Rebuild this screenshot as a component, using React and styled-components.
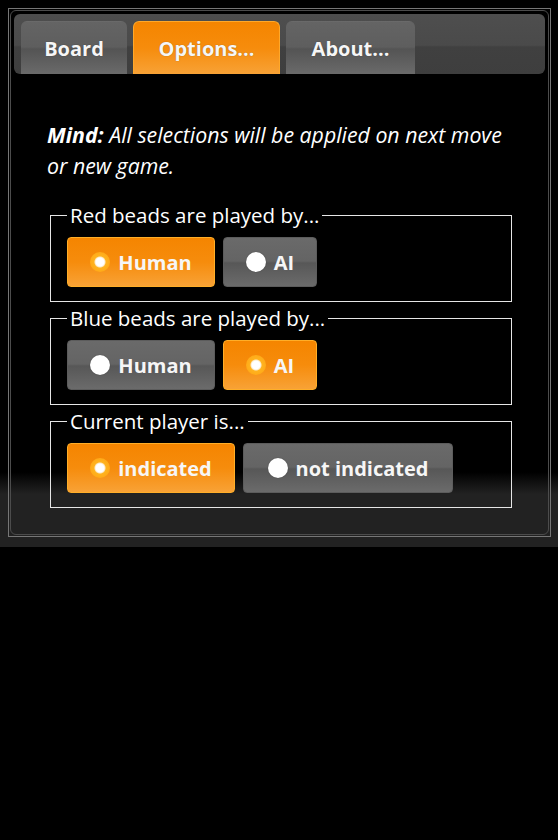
import React from 'react'
import styled, { createGlobalStyle } from 'styled-components'

const GlobalStyle = createGlobalStyle`
  html, body {
    margin: 0;
    background: #000;
  }
  body {
    font-family: "Open Sans", "Noto Sans", sans-serif;
    color: #f4f4f4;
  }
`

const Page = styled.div`
  box-sizing: border-box;
  height: 547px;
  padding: 8px 7px 10px 8px;
  background: linear-gradient(
    to bottom,
    #000 0,
    #000 472px,
    #222 494px,
    #222 100%
  );
`

const Frame = styled.div`
  box-sizing: border-box;
  height: 100%;
  border: 1px solid #767676;
  padding: 1px;
`

const FrameInner = styled.div`
  box-sizing: border-box;
  height: 100%;
  border: 1px solid #4c4c4c;
  border-radius: 6px;
  padding: 3px;
`

const TabBar = styled.div`
  box-sizing: border-box;
  height: 60px;
  display: flex;
  align-items: flex-end;
  gap: 6px;
  padding: 0 7px;
  border-radius: 6px;
  background: linear-gradient(
    to bottom,
    #4e4e4e 0%,
    #4a4a4a 52%,
    #404040 55%,
    #3e3e3e 100%
  );
`

const Tab = styled.div`
  box-sizing: border-box;
  width: ${(p) => p.width}px;
  height: 53px;
  display: flex;
  align-items: center;
  justify-content: center;
  border-radius: 6px 6px 0 0;
  font-size: 20px;
  font-weight: 700;
  color: #f6f6f6;
  text-shadow: 0 0 1px rgba(0, 0, 0, 0.4);
  border: 1px solid ${(p) => (p.active ? '#ffa82a' : 'transparent')};
  border-bottom: none;
  background: ${(p) =>
    p.active
      ? 'linear-gradient(to bottom, #f58500 0%, #f68c0c 50%, #f8a236 100%)'
      : 'linear-gradient(to bottom, #646464 0%, #5e5e5e 48%, #545454 52%, #6a6a6a 100%)'};
`

const Content = styled.div`
  padding: 45px 33px 0 36px;
`

const Note = styled.p`
  margin: 0 0 0 -3px;
  font-size: 21.3px;
  line-height: 31px;
  font-style: italic;
  color: #fff;
  b {
    font-weight: 700;
  }
`

const Group = styled.fieldset`
  margin: 0;
  padding: 8px 16px 14px;
  border: 1px solid #e6e6e6;
  & + & {
    margin-top: 3px;
  }
  &:first-of-type {
    margin-top: 21px;
  }
`

const Legend = styled.legend`
  padding: 0 3px;
  font-size: 20.5px;
  line-height: 27px;
  color: #fff;
`

const Row = styled.div`
  display: flex;
  gap: 8px;
`

const Choice = styled.div`
  box-sizing: border-box;
  width: ${(p) => p.width}px;
  height: 50px;
  display: flex;
  align-items: center;
  justify-content: center;
  gap: 8px;
  border-radius: 4px;
  font-size: 20px;
  font-weight: 700;
  color: #f6f6f6;
  border: 1px solid ${(p) => (p.checked ? '#ffae28' : '#5c5c5c')};
  background: ${(p) =>
    p.checked
      ? 'linear-gradient(to bottom, #f58500 0%, #f68c0c 50%, #f8a236 100%)'
      : 'linear-gradient(to bottom, #6a6a6a 0%, #646464 48%, #575757 52%, #6b6b6b 100%)'};
`

const Dot = styled.span`
  box-sizing: border-box;
  width: 20px;
  height: 20px;
  border-radius: 50%;
  flex: none;
  background: ${(p) =>
    p.checked
      ? 'radial-gradient(circle, #fff 0, #fff 4px, #fde9c4 5px, #ffb31f 6px, #ffaa18 10px)'
      : '#fff'};
  box-shadow: ${(p) => (p.checked ? 'none' : '0 0 1px rgba(0,0,0,0.5)')};
`

const Option = ({ checked, width, children }) => (
  <Choice checked={checked} width={width}>
    <Dot checked={checked} />
    {children}
  </Choice>
)

const groups = [
  {
    title: 'Red beads are played by...',
    options: [
      { label: 'Human', width: 148, checked: true },
      { label: 'AI', width: 94 },
    ],
  },
  {
    title: 'Blue beads are played by...',
    options: [
      { label: 'Human', width: 148 },
      { label: 'AI', width: 94, checked: true },
    ],
  },
  {
    title: 'Current player is...',
    options: [
      { label: 'indicated', width: 168, checked: true },
      { label: 'not indicated', width: 210 },
    ],
  },
]

export default function App() {
  return (
    <>
      <GlobalStyle />
      <Page>
        <Frame>
          <FrameInner>
            <TabBar>
              <Tab width={106}>Board</Tab>
              <Tab width={147} active>
                Options...
              </Tab>
              <Tab width={129}>About...</Tab>
            </TabBar>
            <Content>
              <Note>
                <b>Mind:</b> All selections will be applied on next move or
                new game.
              </Note>
              {groups.map((g) => (
                <Group key={g.title}>
                  <Legend>{g.title}</Legend>
                  <Row>
                    {g.options.map((o) => (
                      <Option key={o.label} checked={o.checked} width={o.width}>
                        {o.label}
                      </Option>
                    ))}
                  </Row>
                </Group>
              ))}
            </Content>
          </FrameInner>
        </Frame>
      </Page>
    </>
  )
}
